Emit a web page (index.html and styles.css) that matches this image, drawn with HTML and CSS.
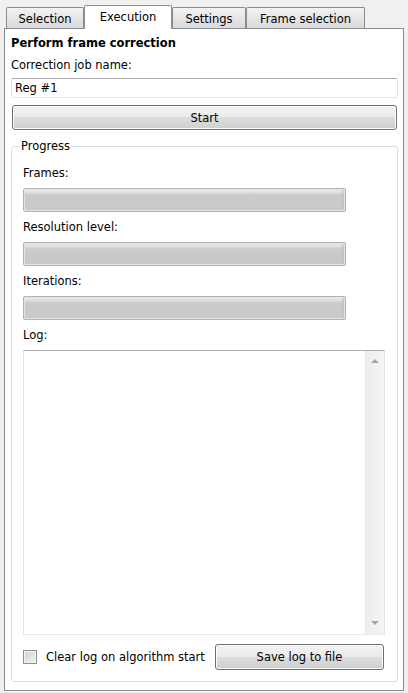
FILE: index.html
```html
<!DOCTYPE html>
<html>
<head>
<meta charset="utf-8">
<link rel="stylesheet" href="styles.css">
</head>
<body>
<div class="tabbar">
  <div class="tab tab-selection">Selection</div>
  <div class="tab tab-execution active">Execution</div>
  <div class="tab tab-settings">Settings</div>
  <div class="tab tab-frames">Frame selection</div>
</div>
<div class="pane">
  <div class="title">Perform frame correction</div>
  <div class="label">Correction job name:</div>
  <div class="lineedit">Reg #1</div>
  <div class="button start">Start</div>
  <fieldset class="group">
    <legend>Progress</legend>
    <div class="glabel first">Frames:</div>
    <div class="pbar"></div>
    <div class="glabel">Resolution level:</div>
    <div class="pbar"></div>
    <div class="glabel">Iterations:</div>
    <div class="pbar"></div>
    <div class="glabel">Log:</div>
    <div class="log">
      <div class="logtext"></div>
      <div class="scroll">
        <div class="arrow up"></div>
        <div class="arrow down"></div>
      </div>
    </div>
    <div class="bottomrow">
      <div class="check"><span class="box"></span><span>Clear log on algorithm start</span></div>
      <div class="button save">Save log to file</div>
    </div>
  </fieldset>
</div>
</body>
</html>
```
FILE: styles.css
```css
html, body {
  margin: 0;
  padding: 0;
}
body {
  background: #f0f0f0;
  font-family: "DejaVu Sans", "Liberation Sans", sans-serif;
  font-size: 11.5px;
  color: #000;
  width: 408px;
  height: 693px;
  overflow: hidden;
}
.tabbar {
  height: 28px;
  display: flex;
  align-items: flex-end;
  padding-left: 6px;
  position: relative;
  z-index: 2;
}
.tab {
  box-sizing: border-box;
  height: 21px;
  border: 1px solid #898c95;
  border-bottom: none;
  background: linear-gradient(#f3f3f3, #e6e6e6 50%, #d9d9d9 100%);
  display: flex;
  align-items: center;
  justify-content: center;
  padding-top: 1px;
  border-radius: 2px 2px 0 0;
}
.tab-selection { width: 78px; }
.tab-execution { width: 88px; }
.tab-settings { width: 74px; }
.tab-frames { width: 119px; }
.tab.active {
  height: 24px;
  margin-bottom: -1px;
  background: #fff;
  padding-top: 0;
  padding-bottom: 2px;
}
.pane {
  box-sizing: border-box;
  margin-left: 4px;
  width: 400px;
  height: 663px;
  border: 1px solid #898c95;
  background: #fff;
  padding: 6px 5px 0 6px;
  position: relative;
  z-index: 1;
}
.title {
  font-weight: bold;
  line-height: 16px;
}
.label {
  margin-top: 6px;
  line-height: 16px;
}
.lineedit {
  box-sizing: border-box;
  margin-top: 5px;
  height: 20px;
  border: 1px solid #e2e3ea;
  border-top-color: #abadb3;
  border-bottom-color: #e3e9ef;
  border-radius: 2px;
  display: flex;
  align-items: center;
  padding-left: 3px;
}
.button {
  box-sizing: border-box;
  height: 25px;
  border: 1px solid #707070;
  border-radius: 3px;
  background: linear-gradient(#f2f2f2, #ebebeb 50%, #dddddd 50%, #cfcfcf);
  box-shadow: inset 0 0 0 1px #fcfcfc;
  display: flex;
  align-items: center;
  justify-content: center;
}
.start {
  margin: 7px 1px 0 1px;
}
.group {
  margin: 9px 0 0 0;
  padding: 0 12px 12px 11px;
  border: 1px solid #d5dfe5;
  border-radius: 3px;
  min-width: 0;
}
.group legend {
  padding: 0 1px;
  margin-left: -3px;
  line-height: 14px;
}
.glabel {
  margin-top: 7px;
  line-height: 16px;
}
.glabel.first {
  margin-top: 12px;
}
.pbar {
  box-sizing: border-box;
  margin-top: 7px;
  width: 323px;
  height: 24px;
  border: 1px solid #b2b2b2;
  border-radius: 2px;
  background: linear-gradient(#ececec, #e2e2e2 3px, #cbcbcb 6px, #c8c8c8);
  box-shadow: inset 0 0 0 1px #e4e4e4, inset -4px 0 3px -2px #bdbdbd;
}
.log {
  box-sizing: border-box;
  margin-top: 7px;
  height: 285px;
  border: 1px solid #e2e3ea;
  border-top-color: #abadb3;
  border-bottom-color: #e3e9ef;
  display: flex;
}
.logtext {
  flex: 1;
}
.scroll {
  width: 18px;
  border-left: 1px solid #e8e8e8;
  background: linear-gradient(90deg, #ececec, #f6f6f6);
  display: flex;
  flex-direction: column;
  justify-content: space-between;
  align-items: center;
  padding: 8px 0 9px 0;
}
.arrow {
  width: 0;
  height: 0;
  border-left: 4px solid transparent;
  border-right: 4px solid transparent;
}
.arrow.up {
  border-bottom: 4px solid #a6a6a6;
}
.arrow.down {
  border-top: 4px solid #a6a6a6;
}
.bottomrow {
  margin-top: 9px;
  height: 25px;
  display: flex;
  align-items: center;
}
.check {
  display: flex;
  align-items: center;
  gap: 9px;
}
.box {
  box-sizing: border-box;
  width: 14px;
  height: 14px;
  border: 1px solid #8e8f8f;
  background: linear-gradient(135deg, #cfcfcf, #f3f3f3);
  box-shadow: inset 0 0 0 1px #f4f4f4;
}
.save {
  margin-left: auto;
  margin-right: 1px;
  width: 169px;
  height: 26px;
}
```
